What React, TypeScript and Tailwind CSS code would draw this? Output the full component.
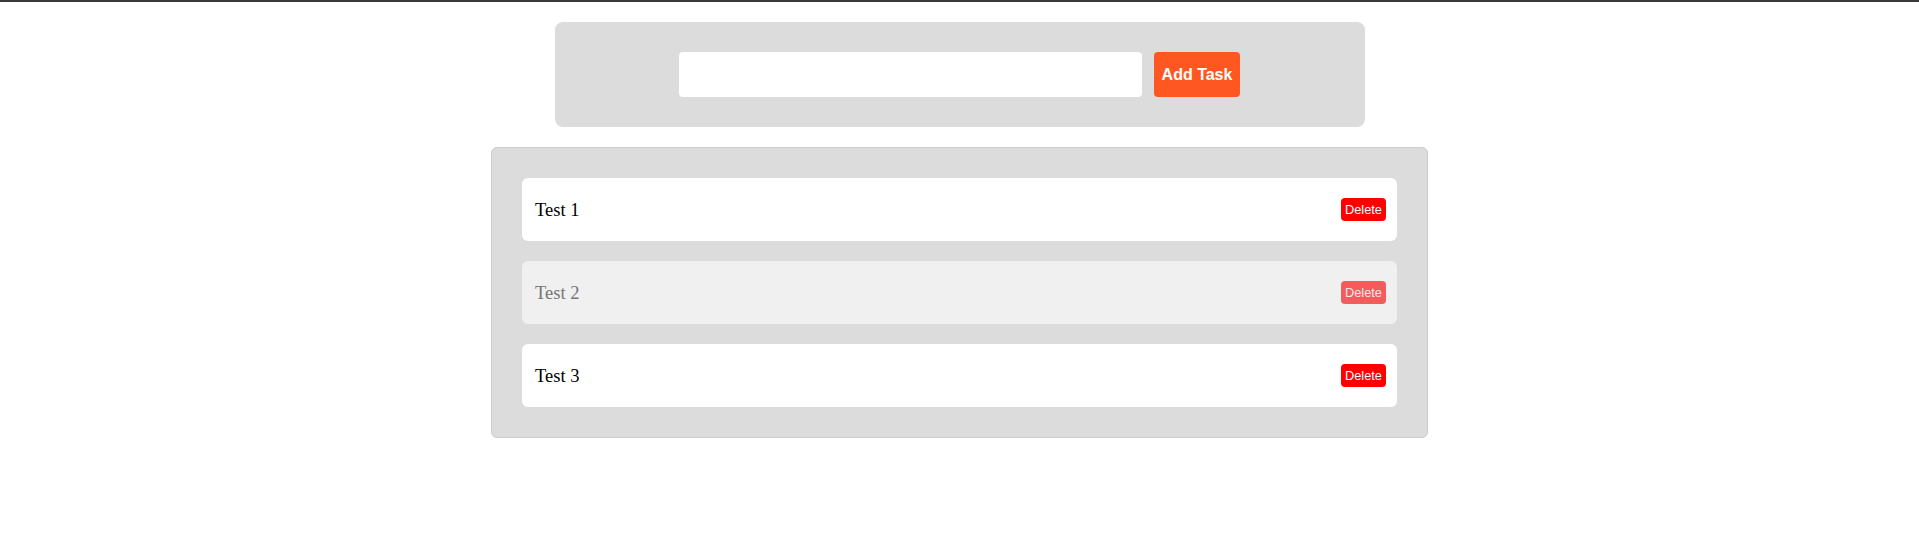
import { useState } from "react";

type Task = { id: number; text: string; done: boolean };

const initialTasks: Task[] = [
  { id: 1, text: "Test 1", done: false },
  { id: 2, text: "Test 2", done: true },
  { id: 3, text: "Test 3", done: false },
];

export default function App() {
  const [tasks, setTasks] = useState<Task[]>(initialTasks);
  const [text, setText] = useState("");

  const addTask = () => {
    if (!text.trim()) return;
    setTasks([...tasks, { id: Date.now(), text, done: false }]);
    setText("");
  };

  const toggleTask = (id: number) => {
    setTasks(tasks.map((t) => (t.id === id ? { ...t, done: !t.done } : t)));
  };

  const deleteTask = (id: number) => {
    setTasks(tasks.filter((t) => t.id !== id));
  };

  return (
    <div className="min-h-[551px] border-t-2 border-[#3a3a3a] bg-white font-['Liberation_Serif',serif]">
      <div className="flex flex-col items-center gap-[20px] pt-[20px]">
        <div className="flex w-[810px] justify-center gap-[12px] rounded-[8px] bg-[#dcdcdc] py-[30px]">
          <input
            type="text"
            value={text}
            onChange={(e) => setText(e.target.value)}
            className="h-[45px] w-[463px] rounded-[4px] border-0 bg-white px-2 outline-none"
          />
          <button
            onClick={addTask}
            className="h-[45px] w-[86px] rounded-[4px] bg-[#ff5722] font-['Liberation_Sans',Arial,sans-serif] text-[16px] font-bold text-white"
          >
            Add Task
          </button>
        </div>

        <div className="flex w-[937px] flex-col gap-[20px] rounded-[6px] border border-[#cccccc] bg-[#dcdcdc] p-[30px]">
          {tasks.map((task) => (
            <div
              key={task.id}
              onClick={() => toggleTask(task.id)}
              className={
                task.done
                  ? "flex h-[63px] items-center justify-between rounded-[6px] bg-[#f0f0f0] pl-[13px] pr-[11px] pt-[2px] text-[18.5px] text-[#767676]"
                  : "flex h-[63px] items-center justify-between rounded-[6px] bg-white pl-[13px] pr-[11px] pt-[2px] text-[18.5px] text-black"
              }
            >
              <span>{task.text}</span>
              <button
                onClick={(e) => {
                  e.stopPropagation();
                  deleteTask(task.id);
                }}
                className={
                  task.done
                    ? "mb-[2px] rounded-[4px] bg-[#f25c5c] px-[4px] py-[4px] font-['Liberation_Sans',Arial,sans-serif] text-[12.8px] leading-[15px] text-[#fde8e8]"
                    : "mb-[2px] rounded-[4px] bg-[#ff0000] px-[4px] py-[4px] font-['Liberation_Sans',Arial,sans-serif] text-[12.8px] leading-[15px] text-white"
                }
              >
                Delete
              </button>
            </div>
          ))}
        </div>
      </div>
    </div>
  );
}
